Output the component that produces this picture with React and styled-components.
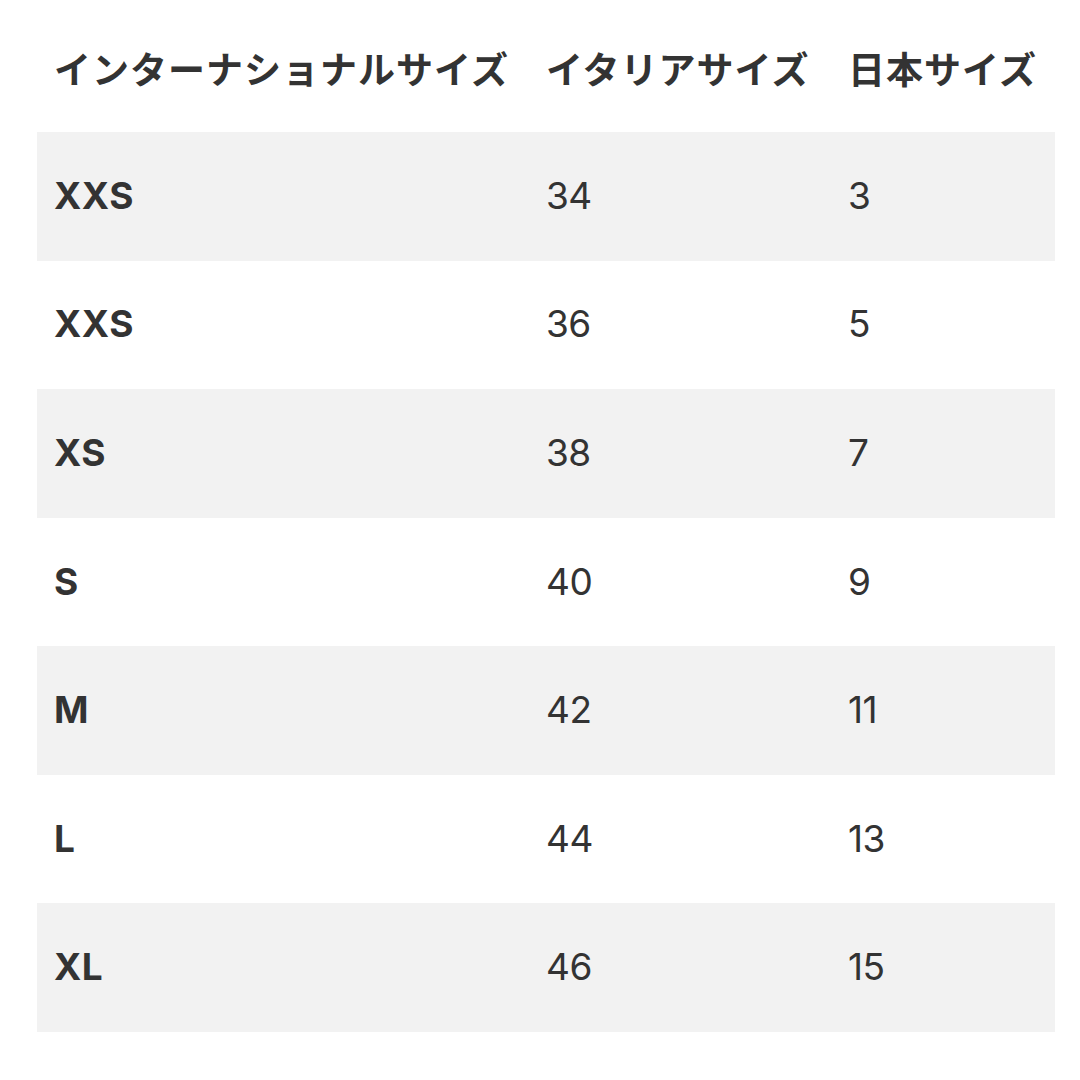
import React from "react";
import styled, { createGlobalStyle } from "styled-components";

const sizes = [
  ["XXS", "34", "3"],
  ["XXS", "36", "5"],
  ["XS", "38", "7"],
  ["S", "40", "9"],
  ["M", "42", "11"],
  ["L", "44", "13"],
  ["XL", "46", "15"],
];

const App = () => {
  return (
    <>
      <GlobalStyle />
      <Page>
        <HeaderRow>
          <HeadCell>インターナショナルサイズ</HeadCell>
          <HeadCell>イタリアサイズ</HeadCell>
          <HeadCell>日本サイズ</HeadCell>
        </HeaderRow>
        <Body>
          {sizes.map(([intl, it, jp], i) => (
            <Row key={i} $shaded={i % 2 === 0}>
              <Cell $bold>{intl}</Cell>
              <Cell>{it}</Cell>
              <Cell>{jp}</Cell>
            </Row>
          ))}
        </Body>
      </Page>
    </>
  );
};

export default App;

const GlobalStyle = createGlobalStyle`
  html, body {
    margin: 0;
    padding: 0;
    background: #ffffff;
  }
`;

const Page = styled.div`
  width: 1080px;
  height: 1080px;
  padding: 0 25px 0 37px;
  box-sizing: border-box;
  color: #333333;
`;

const columns = "492px 302px 1fr";

const HeaderRow = styled.div`
  display: grid;
  grid-template-columns: ${columns};
  align-items: center;
  height: 132px;
  padding-top: 3px;
  box-sizing: border-box;
`;

const HeadCell = styled.div`
  padding-left: 17px;
  font-family: "Noto Sans CJK JP", "Noto Sans", sans-serif;
  font-weight: 700;
  font-size: 37px;
  letter-spacing: 1px;
  white-space: nowrap;
  color: #333333;
`;

const Body = styled.div`
  display: flex;
  flex-direction: column;
  height: 900px;
`;

const Row = styled.div`
  flex: 1;
  display: grid;
  grid-template-columns: ${columns};
  align-items: center;
  background: ${(p) => (p.$shaded ? "#f2f2f2" : "#ffffff")};
`;

const Cell = styled.div`
  padding-left: 17px;
  padding-bottom: 2px;
  font-family: "Inter", "Noto Sans", sans-serif;
  font-size: 37px;
  font-weight: ${(p) => (p.$bold ? 700 : 400)};
  letter-spacing: ${(p) => (p.$bold ? "0.5px" : "-0.5px")};
  color: #333333;
  line-height: 1;
`;
